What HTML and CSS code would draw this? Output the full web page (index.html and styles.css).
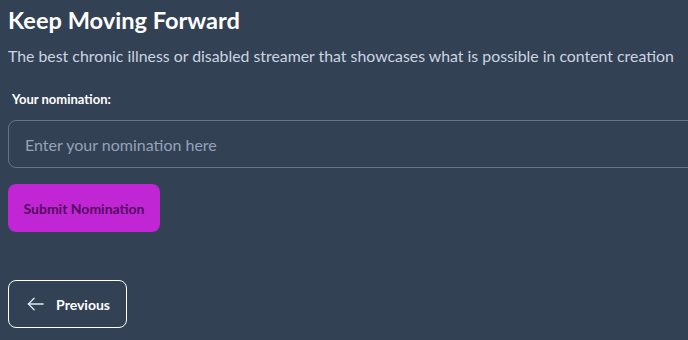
FILE: index.html
```html
<!DOCTYPE html>
<html>
<head>
    <meta charset="utf-8">
    <title>Keep Moving Forward</title>
    <link rel="stylesheet" href="styles.css">
</head>
<body>
    <div class="category">
        <h1 class="title">Keep Moving Forward</h1>
        <p class="subtitle">The best chronic illness or disabled streamer that showcases what is possible in content creation</p>

        <form class="nomination-form">
            <label class="label" for="nomination">Your nomination:</label>
            <div class="input-wrap">
                <input class="input" id="nomination" type="text" placeholder="Enter your nomination here">
            </div>
            <button class="btn btn-submit" type="button">Submit Nomination</button>
        </form>

        <div class="nav">
            <button class="btn btn-prev" type="button">
                <svg class="arrow" width="18" height="14" viewBox="0 0 18 14" fill="none" stroke="currentColor" stroke-width="1.4" stroke-linecap="round" stroke-linejoin="round">
                    <path d="M17 7H1.5"/>
                    <path d="M7.5 1L1.5 7l6 6"/>
                </svg>
                <span>Previous</span>
            </button>
        </div>
    </div>
</body>
</html>
```

FILE: styles.css
```css
html, body {
    margin: 0;
    padding: 0;
    background: #334155;
    overflow: hidden;
}

body {
    font-family: Lato, "Open Sans", sans-serif;
    color: #ffffff;
    width: 688px;
    height: 340px;
}

.category {
    padding: 4px 0 0 8px;
}

.title {
    margin: 0;
    font-size: 23.6px;
    line-height: 32px;
    font-weight: 700;
    color: #ffffff;
}

.subtitle {
    margin: 8px 0 0;
    font-size: 15.85px;
    line-height: 24px;
    color: #cbd5e1;
}

.nomination-form {
    margin-top: 22px;
    display: flex;
    flex-direction: column;
    align-items: flex-start;
}

.label {
    padding-left: 4px;
    font-size: 13px;
    line-height: 18px;
    font-weight: 700;
    color: #ffffff;
}

/* input runs past the right edge in the original, clip it */
.input-wrap {
    margin-top: 12px;
    width: 680px;
    overflow: hidden;
}

.input {
    box-sizing: border-box;
    display: block;
    width: 720px;
    height: 48px;
    padding: 0 16px;
    background: transparent;
    border: 1px solid #64748b;
    border-radius: 8px;
    font-family: Lato, sans-serif;
    font-size: 16px;
    color: #ffffff;
}

.input::placeholder {
    color: #94a3b8;
}

.btn {
    box-sizing: border-box;
    height: 48px;
    border-radius: 8px;
    font-family: Lato, sans-serif;
    font-size: 14px;
    font-weight: 700;
    cursor: pointer;
}

.btn-submit {
    margin-top: 16px;
    width: 152px;
    border: none;
    background: #c026d3;
    color: #560a63;
}

.nav {
    margin-top: 48px;
}

.btn-prev {
    display: flex;
    align-items: center;
    gap: 12px;
    width: 119px;
    padding: 0 16px 0 18px;
    background: transparent;
    border: 1px solid #ffffff;
    color: #ffffff;
}

.arrow {
    color: #e2e8f0;
}
```
